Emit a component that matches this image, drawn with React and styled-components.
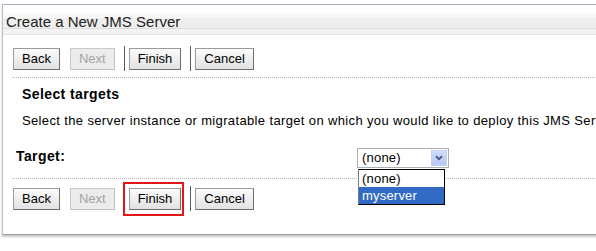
import styled, { createGlobalStyle } from 'styled-components';

const GlobalStyle = createGlobalStyle`
   html, body {
      margin: 0;
      padding: 0;
      background: #fff;
      overflow: hidden;
   }
   body {
      font-family: 'Liberation Sans', Arial, sans-serif;
      color: #000;
   }
`;

const Page = styled.div`
   width: 596px;
   height: 251px;
   padding: 4px 0 0 2px;
   box-sizing: border-box;
   overflow: hidden;
`;

const Panel = styled.section`
   width: 640px;
   border-top: 1px solid #aab2c0;
   border-left: 1px solid #b9bfc9;
   border-bottom: 1px solid #9a9ea6;
   box-shadow: 0 2px 2px rgba(0, 0, 0, 0.22);
   padding-bottom: 23px;
`;

const TitleBar = styled.h1`
   margin: 8px 0 0;
   height: 21px;
   padding-left: 3px;
   font-size: 15px;
   font-weight: normal;
   line-height: 17px;
   color: #222;
   white-space: nowrap;
   background: linear-gradient(
      to bottom,
      #f8f8f8 0,
      #f8f8f8 5px,
      #eeeeee 5px,
      #eeeeee 15px,
      #dcdcdc 15px,
      #dcdcdc 16px,
      #f3f3f3 16px
   );
   border-bottom: 1px solid #e4e4e4;
`;

const Content = styled.div`
   padding-left: 10px;
`;

const ButtonRow = styled.div`
   display: flex;
   align-items: center;
   height: 25px;
   margin-top: ${({ top }) => top}px;
`;

const Button = styled.button`
   position: relative;
   height: 22px;
   padding: 0 8px;
   margin-left: ${({ gap }) => gap || 0}px;
   font-family: 'Liberation Sans', Arial, sans-serif;
   font-size: 13px;
   color: ${({ disabled }) => (disabled ? '#a3a3a3' : '#000')};
   border: 1px solid ${({ disabled }) => (disabled ? '#c9c9c9' : '#9b9b9b')};
   border-right-color: ${({ disabled }) => (disabled ? '#c2c2c2' : '#6f6f6f')};
   border-bottom-color: ${({ disabled }) => (disabled ? '#c2c2c2' : '#6f6f6f')};
   background: ${({ disabled }) =>
      disabled ? '#ececec' : 'linear-gradient(to bottom, #fbfbfb, #e2e2e2)'};
   border-radius: 0;
   cursor: default;

   ${({ highlight }) =>
      highlight &&
      `
      &::after {
         content: '';
         position: absolute;
         left: -7px;
         right: -4px;
         top: -7px;
         bottom: -7px;
         border: 2px solid #e3161b;
      }
   `}
`;

const Separator = styled.span`
   width: 1px;
   height: 25px;
   margin: 0 4px 0 9px;
   background: #5a5a5a;
   visibility: ${({ hide }) => (hide ? 'hidden' : 'visible')};
`;

const Dotted = styled.div`
   margin-left: -1px;
   margin-top: ${({ top }) => top}px;
   border-top: 1px dotted #b3b3b3;
`;

const Section = styled.div`
   padding-left: 9px;
`;

const Heading = styled.h2`
   margin: 8px 0 0;
   font-size: 14px;
   font-weight: bold;
   line-height: 16px;
   letter-spacing: 0.4px;
`;

const Description = styled.p`
   margin: 11px 0 0;
   font-size: 13px;
   line-height: 16px;
   letter-spacing: 0.36px;
   white-space: nowrap;
`;

const FieldRow = styled.div`
   display: flex;
   align-items: flex-start;
   margin-top: 19px;
   padding-left: 3px;
   height: 20px;
`;

const Label = styled.label`
   width: 341px;
   font-size: 14px;
   font-weight: bold;
   line-height: 16px;
   letter-spacing: 0.4px;
`;

const SelectWrap = styled.div`
   position: relative;
`;

const SelectBox = styled.div`
   position: relative;
   width: 86px;
   height: 18px;
   border: 1px solid #aab0b8;
   padding-left: 4px;
   font-size: 13px;
   line-height: 18px;
   letter-spacing: 0.2px;
`;

const ArrowBox = styled.span`
   position: absolute;
   top: 1px;
   right: 1px;
   width: 16px;
   height: 16px;
   display: flex;
   align-items: center;
   justify-content: center;
   background: linear-gradient(to bottom, #cedcfc, #b6c9f4);
   border: 1px solid #c3d2f3;
   box-sizing: border-box;
`;

const OptionList = styled.ul`
   position: absolute;
   top: 21px;
   left: 1px;
   width: 85px;
   margin: 0;
   padding: 0;
   list-style: none;
   background: #fff;
   border: 1px solid #000;
   border-left-color: #7c7c7c;
   z-index: 5;
`;

const Option = styled.li`
   height: 17px;
   padding-left: 3px;
   font-size: 13px;
   line-height: 17px;
   letter-spacing: 0.2px;
   color: ${({ selected }) => (selected ? '#fff' : '#000')};
   background: ${({ selected }) => (selected ? '#316ac5' : '#fff')};
`;

const Actions = ({ top, highlightFinish }) => (
   <ButtonRow top={top}>
      <Button>Back</Button>
      <Button gap={10} disabled>
         Next
      </Button>
      <Separator hide={highlightFinish} />
      <Button highlight={highlightFinish}>Finish</Button>
      <Separator />
      <Button>Cancel</Button>
   </ButtonRow>
);

const App = () => {
   return (
      <Page>
         <GlobalStyle />
         <Panel>
            <TitleBar>Create a New JMS Server</TitleBar>
            <Content>
               <Actions top={11} />
               <Dotted top={6} />
               <Section>
                  <Heading>Select targets</Heading>
                  <Description>
                     Select the server instance or migratable target on which you would like to
                     deploy this JMS Server.
                  </Description>
               </Section>
               <FieldRow>
                  <Label>Target:</Label>
                  <SelectWrap>
                     <SelectBox>
                        (none)
                        <ArrowBox>
                           <svg width="8" height="6" viewBox="0 0 8 6">
                              <path
                                 d="M1 1.2 L4 4.2 L7 1.2"
                                 fill="none"
                                 stroke="#4a5d83"
                                 strokeWidth="2"
                              />
                           </svg>
                        </ArrowBox>
                     </SelectBox>
                     <OptionList>
                        <Option>(none)</Option>
                        <Option selected>myserver</Option>
                     </OptionList>
                  </SelectWrap>
               </FieldRow>
               <Dotted top={10} />
               <Actions top={7} highlightFinish />
            </Content>
         </Panel>
      </Page>
   );
};

export default App;
